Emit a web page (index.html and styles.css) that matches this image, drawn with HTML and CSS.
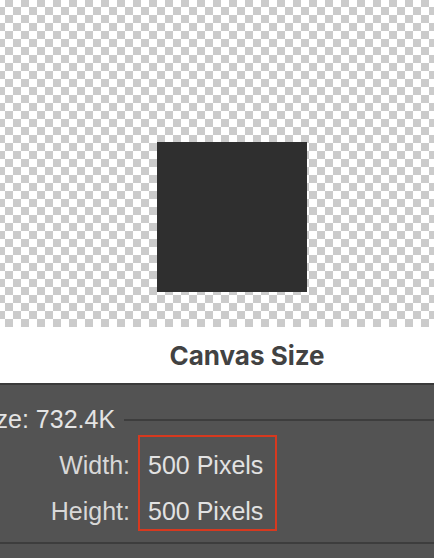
FILE: index.html
```html
<!DOCTYPE html>
<html>
<head>
<meta charset="utf-8">
<link rel="stylesheet" href="styles.css">
</head>
<body>
<div class="canvas-area">
  <div class="artwork"></div>
</div>
<div class="titlebar">
  <h1 class="title">Canvas Size</h1>
</div>
<div class="panel">
  <div class="current">
    <span class="current-text">Current Size: 732.4K</span>
    <span class="rule"></span>
  </div>
  <div class="dims">
    <div class="labels">
      <span>Width:</span>
      <span>Height:</span>
    </div>
    <div class="values">
      <span>500 Pixels</span>
      <span>500 Pixels</span>
    </div>
  </div>
  <div class="divider"></div>
</div>
</body>
</html>
```
FILE: styles.css
```css
* { box-sizing: border-box; }
html, body {
  margin: 0;
  padding: 0;
  width: 434px;
  height: 558px;
  overflow: hidden;
  background: #535353;
}
.canvas-area {
  height: 327px;
  padding: 142px 0 0 157px;
  background-color: #ffffff;
  background-image: repeating-conic-gradient(#cbcbcb 0 25%, #ffffff 0 50%);
  background-size: 16px 16px;
  background-position: -3px -1px;
}
.artwork {
  width: 150px;
  height: 150px;
  background: #2f2f2f;
}
.titlebar {
  height: 56px;
  background: #ffffff;
  display: flex;
  align-items: center;
  justify-content: center;
  padding-left: 60px;
}
.title {
  margin: 0;
  font-family: "Inter", "Liberation Sans", sans-serif;
  font-weight: 700;
  font-size: 26px;
  color: #424242;
}
.panel {
  border-top: 2px solid #3a3a3a;
  background: #535353;
  padding-top: 21px;
  font-family: "Liberation Sans", Arial, sans-serif;
  color: #e4e4e4;
  overflow: hidden;
}
.current {
  display: flex;
  align-items: center;
  height: 26px;
  font-size: 25px;
  line-height: 26px;
  margin-left: -117px;
  white-space: nowrap;
}
.rule {
  flex: 1;
  height: 2px;
  margin-left: 9px;
  margin-top: 2px;
  background: #3d3d3d;
}
.dims {
  display: flex;
  margin-top: 3px;
  font-size: 25px;
  line-height: 26px;
}
.labels {
  width: 130px;
  display: flex;
  flex-direction: column;
  align-items: flex-end;
  gap: 20px;
  padding-top: 17px;
  color: #d8d8d8;
}
.values {
  margin-left: 8px;
  width: 139px;
  height: 96px;
  border: 2px solid #d7391f;
  padding: 15px 0 0 8px;
  display: flex;
  flex-direction: column;
  gap: 20px;
  color: #e2e2e2;
}
.divider {
  margin-top: 11px;
  height: 2px;
  background: #3d3d3d;
}
```
